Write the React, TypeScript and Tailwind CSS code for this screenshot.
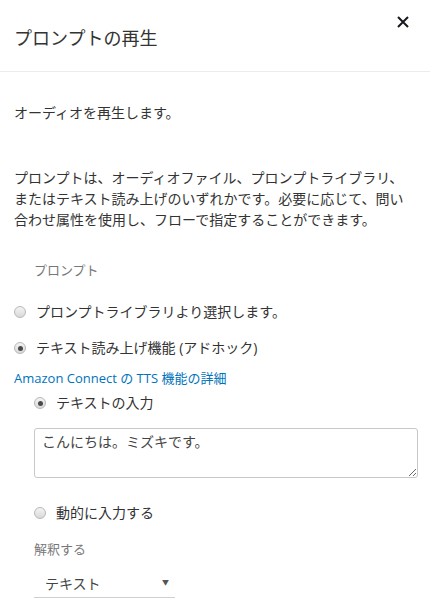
import React from "react";

const font = { fontFamily: '"Open Sans", "Noto Sans CJK JP", sans-serif' };

// Small grey radio button like the old AWS console
const Radio: React.FC<{ checked?: boolean }> = ({ checked }) => (
  <span className="relative inline-flex h-[12px] w-[12px] shrink-0 items-center justify-center rounded-full border border-[#b8b8b8] bg-gradient-to-b from-[#f4f4f4] to-[#d9d9d9]">
    {checked && <span className="h-[5px] w-[5px] rounded-full bg-[#4a4a4a]"></span>}
  </span>
);

const RadioRow: React.FC<{ checked?: boolean; label: string; className?: string }> = ({
  checked,
  label,
  className,
}) => (
  <div className={`flex h-[20px] items-center gap-[10px] ${className ?? ""}`}>
    <Radio checked={checked} />
    <span className="text-[14px] leading-[20px] text-[#333]">{label}</span>
  </div>
);

function App() {
  return (
    <div className="min-h-screen w-[441px] bg-white" style={font}>
      <div className="relative h-[72px] w-[430px] border-b border-[#eaeded]">
        <h1 className="px-[14px] pt-[26px] text-[18px] leading-[24px] text-[#333]">
          プロンプトの再生
        </h1>
        <button className="absolute right-[20px] top-[15px] flex h-[14px] w-[14px] items-center justify-center">
          <svg width="12" height="12" viewBox="0 0 12 12">
            <path d="M1 1 L11 11 M11 1 L1 11" stroke="#16191f" strokeWidth="2" />
          </svg>
        </button>
      </div>

      <div className="w-[430px] px-[14px]">
        <p className="mt-[30px] text-[14px] leading-[21px] text-[#333]">
          オーディオを再生します。
        </p>
        <p className="mt-[44px] text-[14px] leading-[21px] text-[#333]">
          プロンプトは、オーディオファイル、プロンプトライブラリ、またはテキスト読み上げのいずれかです。必要に応じて、問い合わせ属性を使用し、フローで指定することができます。
        </p>

        <div className="mt-[30px] pl-[20px] text-[13px] leading-[20px] text-[#777]">
          プロンプト
        </div>

        <RadioRow className="mt-[22px]" label="プロンプトライブラリより選択します。" />
        <RadioRow className="mt-[16px]" checked label="テキスト読み上げ機能 (アドホック)" />

        <a className="mt-[10px] block text-[13px] leading-[20px] text-[#0073bb]" href="#">
          Amazon Connect の TTS 機能の詳細
        </a>

        <div className="pl-[20px]">
          <RadioRow className="mt-[5px]" checked label="テキストの入力" />
          <textarea
            className="mt-[15px] block h-[50px] w-[384px] rounded-[3px] border border-[#c8c8c8] px-[7px] py-[3px] text-[14px] leading-[20px] text-[#444] outline-none"
            style={font}
            defaultValue="こんにちは。ミズキです。"
          />
          <RadioRow className="mt-[25px]" label="動的に入力する" />

          <div className="mt-[16px] text-[13px] leading-[20px] text-[#777]">解釈する</div>

          <div className="mt-[11px] flex h-[28px] w-[141px] items-center justify-between border-b border-[#cfcfcf] pl-[11px] pr-[6px]">
            <span className="text-[14px] leading-[20px] text-[#444]">テキスト</span>
            <span className="text-[7px] text-[#555]">▼</span>
          </div>
        </div>
      </div>
    </div>
  );
}

export default App;
